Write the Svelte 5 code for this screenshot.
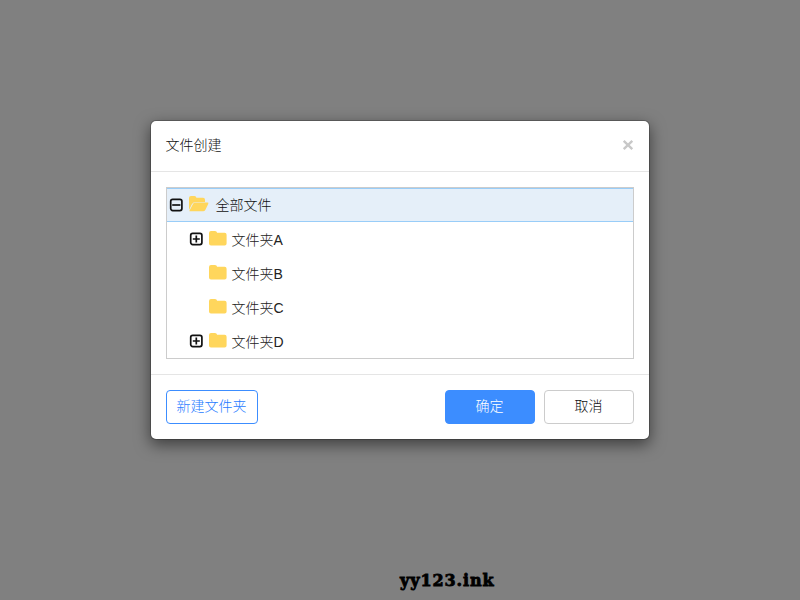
<script lang="ts">
	interface Folder {
		name: string;
		expandable: boolean;
	}

	let open = $state(true);
	let expanded = $state(true);
	let folders = $state<Folder[]>([
		{ name: '文件夹A', expandable: true },
		{ name: '文件夹B', expandable: false },
		{ name: '文件夹C', expandable: false },
		{ name: '文件夹D', expandable: true }
	]);

	function close() {
		open = false;
	}

	function addFolder() {
		const letter = String.fromCharCode(65 + folders.length);
		folders.push({ name: `文件夹${letter}`, expandable: false });
	}
</script>

{#snippet toggle(minus: boolean)}
	<svg class="toggle" viewBox="0 0 14 14" aria-hidden="true">
		<rect x="1.7" y="1.4" width="11.2" height="11.2" rx="2" />
		<path d={minus ? 'M3.2 7H11.4' : 'M3.8 7H10.8M7.3 3.5V10.5'} />
	</svg>
{/snippet}

{#if open}
	<div class="backdrop">
		<div class="modal" role="dialog" aria-modal="true" aria-labelledby="modal-title">
			<div class="modal-header">
				<h4 id="modal-title">文件创建</h4>
				<button class="close" onclick={close} aria-label="关闭">
					<svg viewBox="0 0 12 12"><path d="M1.7 1.9L10.3 10.1M10.3 1.9L1.7 10.1" /></svg>
				</button>
			</div>

			<div class="modal-body">
				<div class="tree">
					<!-- svelte-ignore a11y_click_events_have_key_events -->
					<div class="row root" role="button" tabindex="-1" onclick={() => (expanded = !expanded)}>
						{@render toggle(expanded)}
						<svg class="folder-open" viewBox="0 0 20 16" aria-hidden="true">
							<path d="M0 14V2Q0 0 2 0H5.5Q7.2 0 7.4 1.8H14Q16 1.8 16 3.8V6H6.5Q4.3 6 3 8Z" />
							<path d="M.3 15L4 8Q4.8 6.6 6.4 6.6H18.4Q20 6.6 19.2 8L16.3 14Q15.6 15.3 14.1 15.3H1Q.4 15.3 .3 15Z" />
						</svg>
						<span>全部文件</span>
					</div>
					{#if expanded}
						{#each folders as folder}
							<div class="row child">
								<span class="toggle-slot">
									{#if folder.expandable}{@render toggle(false)}{/if}
								</span>
								<svg class="folder" viewBox="0 0 18 15" aria-hidden="true">
									<path d="M0 2Q0 0 2 0H6Q7.8 0 8.1 1.8H15.6Q17.6 1.8 17.6 3.8V12.6Q17.6 14.6 15.6 14.6H2Q0 14.6 0 12.6Z" />
								</svg>
								<span>{folder.name}</span>
							</div>
						{/each}
					{/if}
				</div>
			</div>

			<div class="modal-footer">
				<button class="btn outline" onclick={addFolder}>新建文件夹</button>
				<button class="btn primary" onclick={close}>确定</button>
				<button class="btn" onclick={close}>取消</button>
			</div>
		</div>
		<div class="site">yy123.ink</div>
	</div>
{/if}

<style>
	:global(body) {
		margin: 0;
		background: #808080;
	}

	.backdrop {
		position: relative;
		box-sizing: border-box;
		height: 600px;
		padding-top: 120px;
		overflow: hidden;
		background: #808080;
		color: #111;
		font: 300 14px/20px 'Liberation Sans', 'Noto Sans CJK SC', sans-serif;
	}

	.modal {
		box-sizing: border-box;
		width: 500px;
		margin: 0 auto;
		border: 1px solid rgba(0, 0, 0, 0.2);
		border-radius: 6px;
		background: #fff;
		background-clip: padding-box;
		box-shadow: 0 5px 15px rgba(0, 0, 0, 0.5);
	}

	.modal-header {
		display: flex;
		align-items: center;
		justify-content: space-between;
		box-sizing: border-box;
		height: 51px;
		padding: 0 15px 2px 14.5px;
		border-bottom: 1px solid #e5e5e5;
	}

	h4 {
		margin: 0;
		font: inherit;
	}

	.close {
		display: flex;
		padding: 0;
		border: 0;
		background: none;
		cursor: pointer;
	}

	.close svg {
		width: 12px;
		height: 12px;
		fill: none;
		stroke: #c8c8c8;
		stroke-width: 2.4;
	}

	.modal-body {
		padding: 15px;
	}

	.tree {
		border: 1px solid #ccc;
	}

	.row {
		display: flex;
		align-items: center;
		box-sizing: border-box;
		height: 34px;
		cursor: pointer;
	}

	.root {
		padding-left: 2px;
		border-top: 1px solid #99cdf8;
		border-bottom: 1px solid #99cdf8;
		background: #e5eff9;
	}

	.child {
		padding-left: 22px;
	}

	.child > span:last-child {
		padding-top: 2px;
		color: #222;
	}

	.toggle-slot {
		display: flex;
		width: 14px;
	}

	.toggle {
		width: 14px;
		height: 14px;
		fill: none;
		stroke: #111;
		stroke-width: 1.7;
	}

	.folder-open {
		width: 20px;
		height: 16px;
		margin: 0 6.5px 2px 6px;
		fill: #ffd65c;
	}

	.folder {
		width: 18px;
		height: 15px;
		margin: 0 4.5px 2px 6px;
		fill: #ffd65c;
	}

	.modal-footer {
		display: flex;
		padding: 15px;
		border-top: 1px solid #e5e5e5;
	}

	.btn {
		box-sizing: border-box;
		width: 90px;
		height: 34px;
		margin-left: 9px;
		padding: 0 1px 2px 0;
		border: 1px solid #ccc;
		border-radius: 4px;
		background: #fff;
		color: #111;
		font: inherit;
		cursor: pointer;
	}

	.outline {
		width: 92px;
		margin: 0 auto 0 0;
		border-color: #3c8dff;
		color: #1f7bff;
	}

	.primary {
		border-color: #3c8dff;
		background: #3c8dff;
		color: #fff;
	}

	/* site mark floats over the backdrop */
	.site {
		position: absolute;
		left: 400px;
		bottom: 9px;
		color: #000;
		font: bold 16px/20px 'DejaVu Serif', serif;
		letter-spacing: 0.9px;
		-webkit-text-stroke: 0.8px #000;
	}
</style>
